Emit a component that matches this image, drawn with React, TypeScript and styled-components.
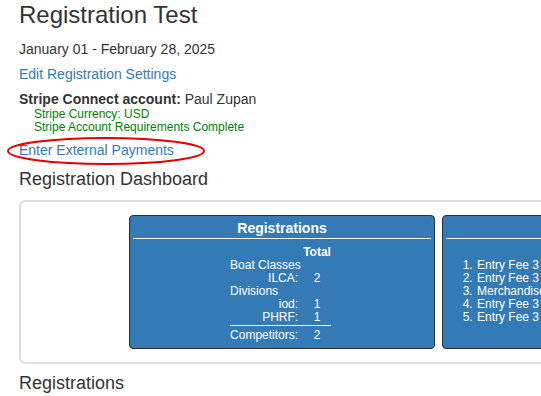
import { FC } from 'react'
import styled, { createGlobalStyle } from 'styled-components'

const GlobalStyle = createGlobalStyle`
  html, body {
    margin: 0;
    padding: 0;
    overflow: hidden;
    background: #fff;
  }
  body {
    font-family: "Liberation Sans", Arial, sans-serif;
    color: #333;
  }
`

const Page = styled.div`
  width: 960px;
  padding: 0 0 0 19px;
  display: flex;
  flex-direction: column;
  align-items: flex-start;
`

const Title = styled.h1`
  margin: 2px 0 0 0;
  font-size: 24px;
  line-height: 26px;
  font-weight: normal;
`

const DateLine = styled.div`
  margin-top: 11px;
  font-size: 14px;
  line-height: 20px;
`

const Link = styled.a`
  display: block;
  font-size: 14px;
  line-height: 20px;
  color: #337ab7;
  text-decoration: none;
  cursor: pointer;
`

const SettingsLink = styled(Link)`
  margin-top: 5px;
`

const StripeBlock = styled.div`
  margin-top: 6px;
  font-size: 14px;
  line-height: 18px;
  & > b {
    font-weight: bold;
  }
`

const StripeStatus = styled.div`
  padding-left: 15px;
  font-size: 12px;
  line-height: 13px;
  color: #008000;
`

const Circled = styled.div`
  position: relative;
  margin-top: 6px;
`

const Ellipse = styled.svg`
  position: absolute;
  left: -13px;
  top: -4px;
  pointer-events: none;
`

const SectionTitle = styled.h2<{ $top: number }>`
  margin: ${p => p.$top}px 0 0 0;
  font-size: 18px;
  line-height: 22px;
  font-weight: normal;
`

const Panel = styled.div`
  align-self: stretch;
  margin-top: 10px;
  border: 2px solid #ddd;
  border-radius: 6px;
  padding: 13px 0 13px 108px;
  display: flex;
  gap: 7px;
`

const Card = styled.div<{ $width: number }>`
  width: ${p => p.$width}px;
  height: 126px;
  padding: 3px;
  background: #337ab7;
  border: 1px solid #2e2e2e;
  border-radius: 4px;
  color: #fff;
  display: flex;
  flex-direction: column;
`

const CardHeader = styled.div`
  font-size: 14px;
  line-height: 19px;
  font-weight: bold;
  text-align: center;
  border-bottom: 1px solid #fff;
`

const Totals = styled.div`
  align-self: center;
  margin-top: 7px;
  padding-right: 3px;
  display: grid;
  grid-template-columns: auto auto;
  column-gap: 5px;
  font-size: 12px;
  line-height: 13px;
`

const HeadCell = styled.div`
  font-weight: bold;
  text-align: center;
`

const Group = styled.div`
  grid-column: 1 / 3;
`

const Label = styled.div<{ $foot?: boolean }>`
  text-align: right;
  ${p => p.$foot && 'text-align: left;'}
`

const Value = styled.div`
  text-align: center;
`

const Footer = styled.div`
  grid-column: 1 / 3;
  display: grid;
  grid-template-columns: subgrid;
  margin-top: 1px;
  padding-top: 3px;
  border-top: 1px solid #fff;
`

const Items = styled.ol`
  margin: 7px 0 0 0;
  padding: 13px 0 0 30px;
  font-size: 12px;
  line-height: 13px;
  white-space: nowrap;
  & > li {
    padding-left: 1px;
  }
`

type Row = { label: string; count: number }

const classes: Row[] = [{ label: 'ILCA:', count: 2 }]
const divisions: Row[] = [
  { label: 'iod:', count: 1 },
  { label: 'PHRF:', count: 1 },
]
const items = ['Entry Fee 3', 'Entry Fee 3', 'Merchandise', 'Entry Fee 3', 'Entry Fee 3']

const RegistrationsCard: FC = () => (
  <Card $width={298}>
    <CardHeader>Registrations</CardHeader>
    <Totals>
      <div />
      <HeadCell>Total</HeadCell>
      <Group>Boat Classes</Group>
      {classes.map(r => (
        <>
          <Label key={r.label}>{r.label}</Label>
          <Value>{r.count}</Value>
        </>
      ))}
      <Group>Divisions</Group>
      {divisions.map(r => (
        <>
          <Label key={r.label}>{r.label}</Label>
          <Value>{r.count}</Value>
        </>
      ))}
      <Footer>
        <Label $foot>Competitors:</Label>
        <Value>2</Value>
      </Footer>
    </Totals>
  </Card>
)

const ItemsCard: FC = () => (
  <Card $width={420}>
    <CardHeader>Items</CardHeader>
    <Items>
      {items.map((item, i) => (
        <li key={i}>{item}</li>
      ))}
    </Items>
  </Card>
)

const App: FC = () => {
  return (
    <>
      <GlobalStyle />
      <Page>
        <Title>Registration Test</Title>
        <DateLine>January 01 - February 28, 2025</DateLine>
        <SettingsLink>Edit Registration Settings</SettingsLink>
        <StripeBlock>
          <b>Stripe Connect account:</b> Paul Zupan
        </StripeBlock>
        <StripeStatus>
          Stripe Currency: USD
          <br />
          Stripe Account Requirements Complete
        </StripeStatus>
        <Circled>
          <Link>Enter External Payments</Link>
          <Ellipse width="200" height="30" viewBox="0 0 200 30">
            <ellipse cx="100" cy="15" rx="98" ry="13" fill="none" stroke="#e00000" strokeWidth="2" />
          </Ellipse>
        </Circled>
        <SectionTitle $top={8}>Registration Dashboard</SectionTitle>
        <Panel>
          <RegistrationsCard />
          <ItemsCard />
        </Panel>
        <SectionTitle $top={8}>Registrations</SectionTitle>
      </Page>
    </>
  )
}

export default App
